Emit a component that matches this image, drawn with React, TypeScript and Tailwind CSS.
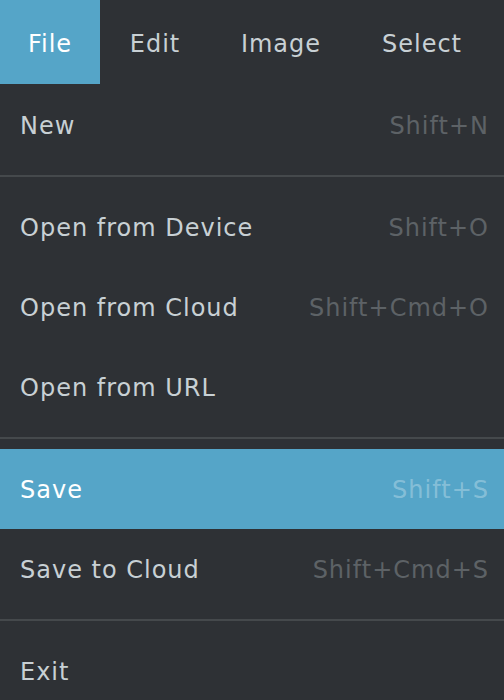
import React from "react";

const tabs = [
  { label: "File", w: "w-[100px]" },
  { label: "Edit", w: "w-[110px]" },
  { label: "Image", w: "w-[142px]" },
  { label: "Select", w: "w-[140px]" },
];

type Item = { label: string; shortcut?: string; active?: boolean } | "sep";

const items: Item[] = [
  { label: "New", shortcut: "Shift+N" },
  "sep",
  { label: "Open from Device", shortcut: "Shift+O" },
  { label: "Open from Cloud", shortcut: "Shift+Cmd+O" },
  { label: "Open from URL" },
  "sep",
  { label: "Save", shortcut: "Shift+S", active: true },
  { label: "Save to Cloud", shortcut: "Shift+Cmd+S" },
  "sep",
  { label: "Exit" },
];

export default function App() {
  return (
    <div
      className="w-[504px] h-[700px] overflow-hidden bg-[#2e3135] text-[24px] tracking-[1px]"
      style={{ fontFamily: '"DejaVu Sans", sans-serif' }}
    >
      {/* Menu bar */}
      <div className="flex h-[84px]">
        {tabs.map((t, i) => (
          <div
            key={t.label}
            className={
              "flex items-center justify-center pt-[3px] " +
              t.w +
              (i === 0 ? " bg-[#55a5c8] text-white" : " text-[#c8d0d4]")
            }
          >
            {t.label}
          </div>
        ))}
      </div>

      {/* Dropdown */}
      <div className="flex flex-col pt-px">
        {items.map((it, i) =>
          it === "sep" ? (
            <div key={i} className="my-[10px] h-[2px] bg-[#45494c]" />
          ) : (
            <div
              key={i}
              className={
                "flex items-center justify-between h-[80px] pl-[20px] pr-[15px] pt-[2px] " +
                (it.active ? "bg-[#55a5c8] text-white" : "text-[#c8d0d4]")
              }
            >
              <span>{it.label}</span>
              {it.shortcut && (
                <span className={it.active ? "text-white/30" : "text-[#5d6266]"}>
                  {it.shortcut}
                </span>
              )}
            </div>
          )
        )}
      </div>
    </div>
  );
}
